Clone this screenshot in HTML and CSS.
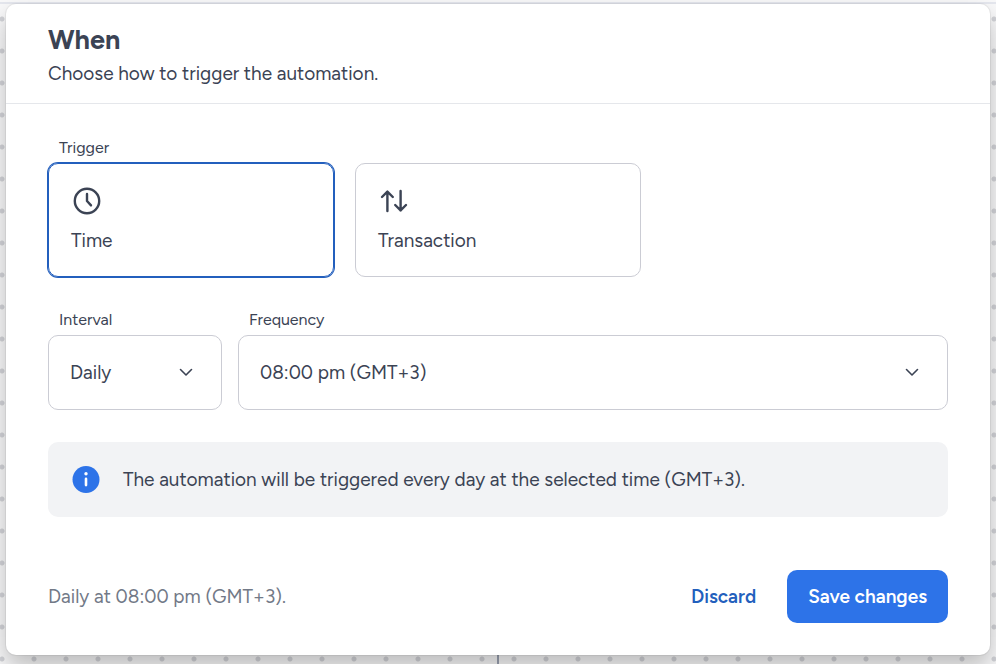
FILE: index.html
```html
<!DOCTYPE html>
<html lang="en">
<head>
    <meta charset="UTF-8">
    <meta name="viewport" content="width=device-width, initial-scale=1.0">
    <title>When</title>
    <link rel="stylesheet" href="styles.css">
</head>
<body>

    <div class="connector"></div>

    <form class="modal">
        <header class="modal-header">
            <h2>When</h2>
            <p>Choose how to trigger the automation.</p>
        </header>

        <div class="modal-body">
            <fieldset class="trigger">
                <legend class="field-label">Trigger</legend>
                <div class="trigger-options">
                    <label class="trigger-card">
                        <input type="radio" name="trigger" value="time" checked>
                        <svg class="icon" viewBox="0 0 32 32">
                            <circle cx="16" cy="16" r="12.2"/>
                            <path d="M16 9v7l4 4.4"/>
                        </svg>
                        <span>Time</span>
                    </label>
                    <label class="trigger-card">
                        <input type="radio" name="trigger" value="transaction">
                        <svg class="icon" viewBox="0 0 32 32">
                            <path d="M9.4 26V6.6M4 12l5.4-5.4L14.8 12"/>
                            <path d="M22.6 6v19.4M17.2 20l5.4 5.4L28 20"/>
                        </svg>
                        <span>Transaction</span>
                    </label>
                </div>
            </fieldset>

            <div class="schedule">
                <div class="field interval">
                    <label class="field-label" for="interval">Interval</label>
                    <div class="select-box">
                        <select id="interval" name="interval">
                            <option>Daily</option>
                            <option>Weekly</option>
                            <option>Monthly</option>
                        </select>
                        <svg class="chevron" viewBox="0 0 16 16"><path d="M2.5 5.5L8 11l5.5-5.5"/></svg>
                    </div>
                </div>
                <div class="field frequency">
                    <label class="field-label" for="frequency">Frequency</label>
                    <div class="select-box">
                        <select id="frequency" name="frequency">
                            <option>08:00 pm (GMT+3)</option>
                            <option>09:00 pm (GMT+3)</option>
                        </select>
                        <svg class="chevron" viewBox="0 0 16 16"><path d="M2.5 5.5L8 11l5.5-5.5"/></svg>
                    </div>
                </div>
            </div>

            <div class="info">
                <svg class="info-icon" viewBox="0 0 28 28">
                    <circle cx="14" cy="13.5" r="13.5" fill="#2d73e8"/>
                    <circle cx="14" cy="7.8" r="1.7" fill="#fff"/>
                    <path d="M14 12.9v6.2" stroke="#fff" stroke-width="2.6" stroke-linecap="round"/>
                </svg>
                <p>The automation will be triggered every day at the selected time (GMT+3).</p>
            </div>
        </div>

        <footer class="modal-footer">
            <p class="summary">Daily at 08:00 pm (GMT+3).</p>
            <button type="button" class="btn">Discard</button>
            <button type="submit" class="btn btn-primary">Save changes</button>
        </footer>
    </form>

</body>
</html>
```

FILE: styles.css
```css
* {
    box-sizing: border-box;
}

body {
    margin: 0;
    padding: 2px 6px 9px;
    min-height: 100vh;
    overflow: hidden;
    font-family: Figtree, Inter, sans-serif;
    font-size: 19px;
    line-height: 27px;
    color: #3b4354;
    background-color: #f9f9fa;
    background-image: radial-gradient(circle, #d3d4d9 2px, transparent 3px);
    background-size: 32px 32px;
    background-position: 18px 3px;
}

/* bottom edge of the toolbar behind the dialog */
body::before {
    content: "";
    display: block;
    height: 2px;
    margin: 0 -6px;
    background-color: #e5e7ee;
}

h2,
p {
    margin: 0;
}

.connector {
    position: absolute;
    top: 50%;
    bottom: 0;
    left: calc(50% - 1px);
    width: 2px;
    background-color: #9ca3b3;
    z-index: -1;
}

.modal {
    background-color: #fff;
    border-radius: 10px;
    box-shadow: 0 0 0 1px rgba(0, 0, 0, 0.05), 0 12px 24px rgba(0, 0, 0, 0.25);
}

.modal-header {
    padding: 20px 42px 16px;
    border-bottom: 1px solid #e5e7eb;
}

.modal-header h2 {
    font-size: 27px;
    line-height: 32px;
    font-weight: 700;
    padding-bottom: 4px;
}

.modal-body {
    display: flex;
    flex-direction: column;
    gap: 32px;
    padding: 33px 42px 53px;
}

.field-label {
    display: block;
    padding: 0 11px;
    font-size: 16px;
    line-height: 22px;
    margin-bottom: 4px;
}

.trigger {
    margin: 0;
    padding: 0;
    border: none;
    min-width: 0;
}

.trigger-options {
    display: grid;
    grid-template-columns: repeat(3, 1fr);
    gap: 21px;
}

.trigger-card {
    position: relative;
    display: flex;
    flex-direction: column;
    gap: 10px;
    padding: 21px 22px 22px;
    border: 1px solid #cbccd4;
    border-radius: 10px;
    cursor: pointer;
}

.trigger-card:has(input:checked) {
    border-color: #235fbd;
    box-shadow: 0 0 0 1px #235fbd;
}

.trigger-card input {
    position: absolute;
    opacity: 0;
}

.icon,
.chevron {
    fill: none;
    stroke: #3b4354;
    stroke-linecap: round;
    stroke-linejoin: round;
}

.icon {
    width: 32px;
    height: 32px;
    stroke-width: 2.4;
}

.schedule {
    display: flex;
    gap: 16px;
}

.interval {
    width: 174px;
}

.frequency {
    flex: 1;
}

.select-box {
    position: relative;
}

select {
    display: block;
    width: 100%;
    height: 75px;
    padding: 0 48px 1px 21px;
    font: inherit;
    color: inherit;
    background-color: #fff;
    border: 1px solid #cbccd4;
    border-radius: 10px;
    appearance: none;
}

.chevron {
    position: absolute;
    top: 29px;
    right: 28px;
    width: 16px;
    height: 16px;
    stroke-width: 1.6;
    pointer-events: none;
}

.info {
    display: flex;
    align-items: center;
    gap: 23px;
    padding: 0 24px;
    min-height: 75px;
    background-color: #f2f3f5;
    border-radius: 10px;
}

.info-icon {
    width: 28px;
    height: 28px;
    flex: none;
}

.modal-footer {
    display: flex;
    align-items: center;
    gap: 10px;
    padding: 0 42px 32px;
}

.summary {
    flex: 1;
    color: #727987;
}

.btn {
    padding: 13px 21px;
    font: inherit;
    font-weight: 600;
    color: #235fbd;
    background: none;
    border: none;
    border-radius: 10px;
    cursor: pointer;
}

.btn-primary {
    color: #fff;
    background-color: #2d73e8;
}
```
